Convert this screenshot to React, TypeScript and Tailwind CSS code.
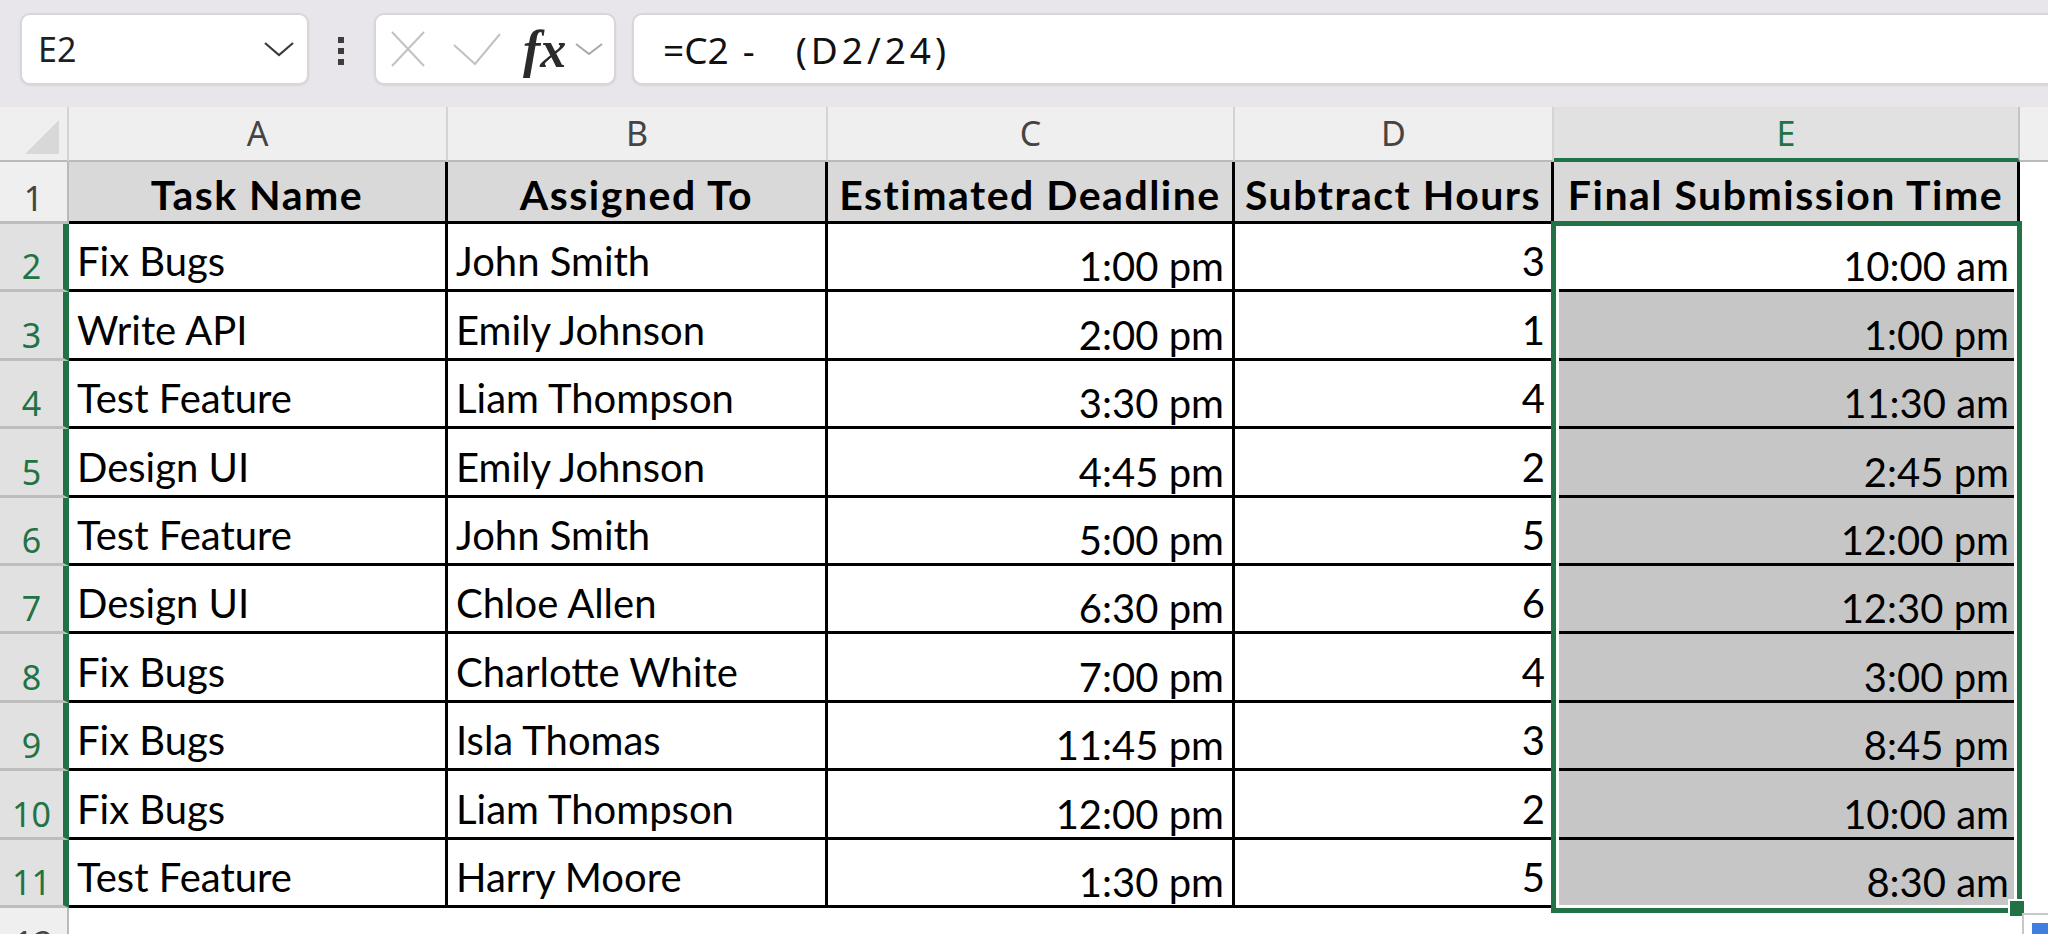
import React from "react";

type Row = { n: number; task: string; who: string; deadline: string; hours: number; final: string };

const rows: Row[] = [
  { n: 2, task: "Fix Bugs", who: "John Smith", deadline: "1:00 pm", hours: 3, final: "10:00 am" },
  { n: 3, task: "Write API", who: "Emily Johnson", deadline: "2:00 pm", hours: 1, final: "1:00 pm" },
  { n: 4, task: "Test Feature", who: "Liam Thompson", deadline: "3:30 pm", hours: 4, final: "11:30 am" },
  { n: 5, task: "Design UI", who: "Emily Johnson", deadline: "4:45 pm", hours: 2, final: "2:45 pm" },
  { n: 6, task: "Test Feature", who: "John Smith", deadline: "5:00 pm", hours: 5, final: "12:00 pm" },
  { n: 7, task: "Design UI", who: "Chloe Allen", deadline: "6:30 pm", hours: 6, final: "12:30 pm" },
  { n: 8, task: "Fix Bugs", who: "Charlotte White", deadline: "7:00 pm", hours: 4, final: "3:00 pm" },
  { n: 9, task: "Fix Bugs", who: "Isla Thomas", deadline: "11:45 pm", hours: 3, final: "8:45 pm" },
  { n: 10, task: "Fix Bugs", who: "Liam Thompson", deadline: "12:00 pm", hours: 2, final: "10:00 am" },
  { n: 11, task: "Test Feature", who: "Harry Moore", deadline: "1:30 pm", hours: 5, final: "8:30 am" },
];

function FormulaBar() {
  return (
    <div className="flex h-[107px] items-start bg-[#e9e6eb] pt-[13px] font-['Noto_Sans',sans-serif]">
      {/* name box */}
      <div className="ml-[20px] flex h-[72px] w-[289px] shrink-0 items-center justify-between rounded-[10px] border-2 border-[#d9d6da] bg-white pl-[16px] pr-[12px] shadow-[0_1px_2px_rgba(0,0,0,0.08)]">
        <span className="text-[34px] leading-none text-[#1f1f1f]">E2</span>
        <svg width="32" height="16" viewBox="0 0 32 16" fill="none">
          <polyline points="2,2 16,14 30,2" stroke="#3a3a3a" strokeWidth="2.2" />
        </svg>
      </div>

      {/* more dots */}
      <div className="ml-[29px] mt-[24px] flex w-[7px] shrink-0 flex-col gap-[5px]">
        <span className="h-[6px] w-[6px] bg-[#3d3d3d]" />
        <span className="h-[6px] w-[6px] bg-[#3d3d3d]" />
        <span className="h-[6px] w-[6px] bg-[#3d3d3d]" />
      </div>

      {/* cancel / enter / fx */}
      <div className="ml-[29px] flex h-[72px] w-[242px] shrink-0 items-center rounded-[10px] border-2 border-[#d9d6da] bg-white pl-[14px] shadow-[0_1px_2px_rgba(0,0,0,0.08)]">
        <svg width="36" height="38" viewBox="0 0 36 38" fill="none">
          <line x1="2" y1="2" x2="34" y2="36" stroke="#c2c2c2" strokeWidth="2" />
          <line x1="34" y1="2" x2="2" y2="36" stroke="#c2c2c2" strokeWidth="2" />
        </svg>
        <svg className="ml-[27px]" width="48" height="33" viewBox="0 0 48 33" fill="none">
          <polyline points="1,12 22,31 47,1" stroke="#c2c2c2" strokeWidth="2" />
        </svg>
        <span className="ml-[22px] mt-[2px] font-['Liberation_Serif',serif] text-[52px] font-bold italic leading-none text-[#2b2b2b]">
          fx
        </span>
        <svg className="ml-[8px]" width="30" height="14" viewBox="0 0 30 14" fill="none">
          <polyline points="2,2 15,12 28,2" stroke="#a8a8a8" strokeWidth="2" />
        </svg>
      </div>

      {/* formula input */}
      <div className="ml-[16px] flex h-[72px] w-[1500px] shrink-0 items-center rounded-[10px] border-2 border-[#d9d6da] bg-white pl-[29px] shadow-[0_1px_2px_rgba(0,0,0,0.08)]">
        <div className="flex items-center text-[37px] leading-none text-[#111]">
          <span>=C2</span>
          <span className="ml-[14px]">-</span>
          <span className="ml-[41px] tracking-[4px]">(D2/24)</span>
        </div>
      </div>
    </div>
  );
}

function ColumnHeaders() {
  const base =
    "flex shrink-0 items-end justify-center border-r-2 border-b-2 border-r-[#d4d4d4] border-b-[#bababa] bg-[#efefef] pb-[10px] text-[34px] leading-none text-[#444]";
  return (
    <div className="flex h-[55px] font-['Noto_Sans',sans-serif]">
      <div className="relative w-[69px] shrink-0 border-r-2 border-b-2 border-r-[#d4d4d4] border-b-[#bababa] bg-[#efefef]">
        <svg className="absolute left-[25px] top-[13px]" width="34" height="34" viewBox="0 0 34 34">
          <polygon points="34,0 34,34 0,34" fill="#d8d8d8" />
        </svg>
      </div>
      <div className={`${base} w-[379px]`}>A</div>
      <div className={`${base} w-[380px]`}>B</div>
      <div className={`${base} w-[407px]`}>C</div>
      <div className={`${base} w-[319px]`}>D</div>
      <div className="flex w-[466px] shrink-0 items-end justify-center border-r-2 border-b-4 border-r-[#c4c4c4] border-b-[#217346] bg-[#e1e1e1] pb-[8px] text-[34px] leading-none text-[#217346]">
        E
      </div>
      <div className="flex-1 border-b-2 border-b-[#bababa] bg-[#efefef]" />
    </div>
  );
}

function TitleRow() {
  const th =
    "flex shrink-0 items-end justify-center whitespace-nowrap border-r-[3px] border-b-[3px] border-black bg-[#d9d9d9] pb-[6px] text-[41px] font-bold leading-none tracking-[1.5px] text-black";
  return (
    <div className="flex h-[62px] font-['Lato',sans-serif]">
      <div className="flex w-[69px] shrink-0 items-end justify-center border-r-2 border-b-[3px] border-r-[#bababa] border-b-[#bdbdbd] bg-[#efefef] pb-[6px] font-['Noto_Sans',sans-serif] text-[34px] leading-none text-[#444]">
        1
      </div>
      <div className={`${th} w-[379px]`}>Task Name</div>
      <div className={`${th} w-[380px]`}>Assigned To</div>
      <div className={`${th} w-[407px]`}>Estimated Deadline</div>
      <div className={`${th} w-[319px]`}>Subtract Hours</div>
      <div className={`${th} w-[466px]`}>Final Submission Time</div>
      <div className="flex-1 bg-white" />
    </div>
  );
}

function DataRow({ r }: { r: Row }) {
  const td = "flex shrink-0 items-end border-r-[3px] border-b-[3px] border-black text-[40px] leading-none text-black";
  return (
    <div className="flex h-[68.4px] font-['Lato',sans-serif]">
      <div className="flex w-[69px] shrink-0 items-end justify-center border-r-[6px] border-b-[3px] border-r-[#217346] border-b-[#bdbdbd] bg-[#e1e1e1] pb-[6px] font-['Noto_Sans',sans-serif] text-[34px] leading-none text-[#217346]">
        {r.n}
      </div>
      <div className={`${td} w-[379px] pb-[8px] pl-[8px]`}>{r.task}</div>
      <div className={`${td} w-[380px] pb-[8px] pl-[8px]`}>{r.who}</div>
      <div className={`${td} w-[407px] justify-end pb-[3px] pr-[8px]`}>{r.deadline}</div>
      <div className={`${td} w-[319px] justify-end pb-[8px] pr-[6px]`}>{r.hours}</div>
      <div
        className={`${td} w-[466px] justify-end pb-[3px] pr-[8px] ${r.n === 2 ? "bg-white" : "bg-[#c6c6c6]"}`}
      >
        {r.final}
      </div>
      <div className="flex-1 bg-white" />
    </div>
  );
}

export default function App() {
  return (
    <div className="relative h-[934px] w-[2048px] overflow-hidden bg-white">
      <FormulaBar />
      <ColumnHeaders />
      <TitleRow />
      {rows.map((r) => (
        <DataRow key={r.n} r={r} />
      ))}
      <div className="flex h-[68px]">
        <div className="flex w-[69px] shrink-0 items-start justify-center border-r-2 border-r-[#bababa] bg-[#efefef] pt-[18px] font-['Noto_Sans',sans-serif] text-[34px] leading-none text-[#444]">
          12
        </div>
        <div className="flex-1 bg-white" />
      </div>

      {/* selected range outline */}
      <div className="pointer-events-none absolute left-[1551px] top-[221px] h-[692px] w-[471px] border-[5px] border-[#217346] shadow-[inset_0_0_0_3px_#ffffff]" />
      {/* fill handle */}
      <div className="absolute left-[2008px] top-[899px] h-[19px] w-[18px] border-2 border-white bg-[#217346]" />
      {/* quick analysis */}
      <div className="absolute left-[2022px] top-[913px] h-[40px] w-[40px] border-2 border-[#c8c8c8] bg-white p-[8px]">
        <div className="h-[16px] w-[16px] bg-[#3f7fe0]" />
      </div>
    </div>
  );
}
